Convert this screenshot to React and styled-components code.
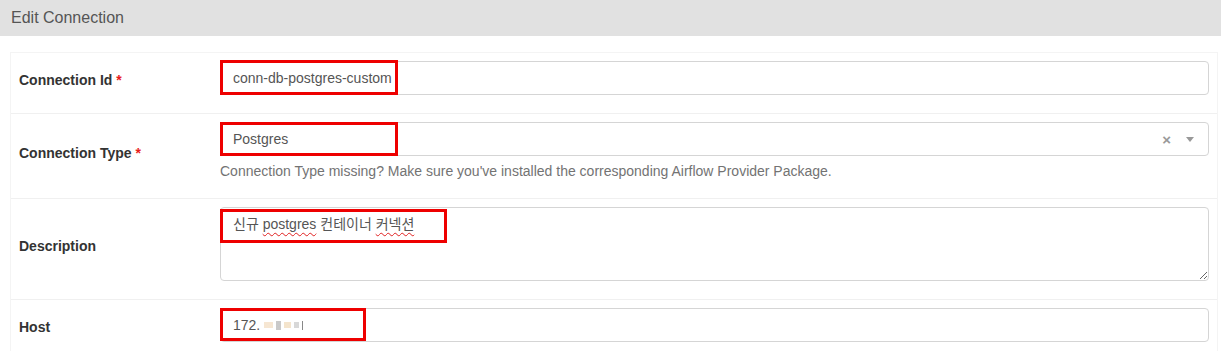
import React from "react";
import styled, { createGlobalStyle } from "styled-components";

const GlobalStyle = createGlobalStyle`
body {
  margin: 0;
  background: #fff;
  font-family: "Liberation Sans", Arial, "Noto Sans CJK KR", sans-serif;
  font-size: 14px;
  color: #333;
}
`

const Page = styled.div`
width: 1221px;
height: 351px;
overflow: hidden;
`

const Heading = styled.div`
height: 36px;
background-color: #e1e1e1;
color: #555;
font-size: 16px;
display: flex;
align-items: center;
padding-left: 11px;
`

const Table = styled.div`
width: 1208px;
margin: 16px 0 0 10px;
border: 1px solid #f4f4f4;
border-bottom: none;
box-sizing: border-box;
`

const Row = styled.div`
display: grid;
grid-template-columns: 201px 1fr;
border-top: ${p => (p.$first ? "none" : "1px solid #f0f0f0")};
`

const LabelCell = styled.div`
padding: 0 8px 6px;
display: flex;
align-items: center;
font-weight: bold;
color: #333;
`

const Required = styled.span`
color: #e8201b;
margin-left: 4px;
`

const ValueCell = styled.div`
padding: 8px 8px 18px;
position: relative;
`

const Field = styled.div`
position: relative;
`

const Input = styled.div`
height: 34px;
box-sizing: border-box;
border: 1px solid #d5d5d5;
border-radius: 4px;
padding: 0 12px;
display: flex;
align-items: center;
color: #555;
`

const SelectBox = styled(Input)`
justify-content: space-between;
padding-right: 14px;
`

const SelectTools = styled.div`
display: flex;
align-items: center;
gap: 15px;
color: #999;
`

const Clear = styled.span`
font-size: 15px;
font-weight: bold;
line-height: 1;
`

const Caret = styled.span`
width: 0;
height: 0;
border-left: 4px solid transparent;
border-right: 4px solid transparent;
border-top: 5px solid #999;
`

const TextArea = styled.div`
height: 74px;
box-sizing: border-box;
border: 1px solid #d5d5d5;
border-radius: 4px;
padding: 5px 12px;
color: #555;
overflow: auto;
resize: vertical;
`

const Misspelled = styled.span`
text-decoration: underline wavy #e02020;
text-decoration-thickness: 1px;
text-underline-offset: 3px;
`

const Help = styled.div`
margin-top: 6px;
color: #737373;
line-height: 18px;
`

const Mark = styled.div`
position: absolute;
left: 0;
top: ${p => p.$top}px;
width: ${p => p.$w}px;
height: ${p => p.$h}px;
border: 3px solid #ee0000;
box-sizing: border-box;
pointer-events: none;
`

const Blur = styled.span`
display: inline-flex;
gap: 3px;
margin-left: 4px;
align-items: center;
`

const Pixel = styled.span`
display: inline-block;
width: ${p => p.$w || 5}px;
height: ${p => p.$h || 6}px;
background: ${p => p.$c};
`

function App() {
  return (
    <Page>
      <GlobalStyle />
      <Heading>Edit Connection</Heading>
      <Table>
        <Row $first>
          <LabelCell>Connection Id<Required>*</Required></LabelCell>
          <ValueCell>
            <Field>
              <Input>conn-db-postgres-custom</Input>
              <Mark $top={-1} $w={178} $h={35} />
            </Field>
          </ValueCell>
        </Row>
        <Row>
          <LabelCell>Connection Type<Required>*</Required></LabelCell>
          <ValueCell>
            <Field>
              <SelectBox>
                Postgres
                <SelectTools>
                  <Clear>×</Clear>
                  <Caret />
                </SelectTools>
              </SelectBox>
              <Mark $top={0} $w={178} $h={34} />
            </Field>
            <Help>Connection Type missing? Make sure you've installed the corresponding Airflow Provider Package.</Help>
          </ValueCell>
        </Row>
        <Row>
          <LabelCell>Description</LabelCell>
          <ValueCell>
            <Field>
              <TextArea>
                신규 <Misspelled>postgres</Misspelled> 컨테이너 <Misspelled>커넥션</Misspelled>
              </TextArea>
              <Mark $top={2} $w={227} $h={34} />
            </Field>
          </ValueCell>
        </Row>
        <Row>
          <LabelCell>Host</LabelCell>
          <ValueCell>
            <Field>
              <Input>
                172.
                <Blur>
                  <Pixel $c="#f6e6d2" $w={9} />
                  <Pixel $c="#c9c9c9" $h={9} />
                  <Pixel $c="#f4e4cc" $w={7} />
                  <Pixel $c="#d8d8d8" />
                  <Pixel $c="#888" $w={1} $h={9} />
                </Blur>
              </Input>
              <Mark $top={0} $w={146} $h={33} />
            </Field>
          </ValueCell>
        </Row>
      </Table>
    </Page>
  );
}

export default App;
